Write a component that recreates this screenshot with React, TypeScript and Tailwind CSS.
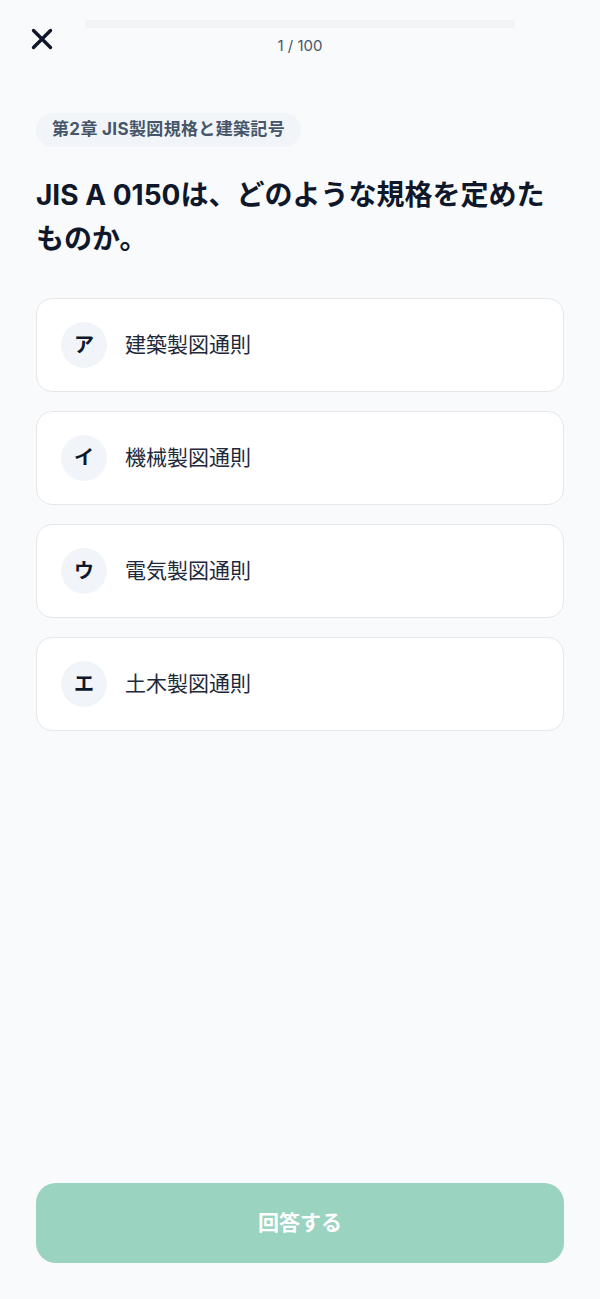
import React from "react";

const options = [
  { key: "ア", text: "建築製図通則" },
  { key: "イ", text: "機械製図通則" },
  { key: "ウ", text: "電気製図通則" },
  { key: "エ", text: "土木製図通則" },
];

export default function App() {
  return (
    <div
      className="w-[600px] h-[1299px] bg-[#f9fafb] flex flex-col text-[#0f172a]"
      style={{ fontFamily: 'Inter, "Noto Sans CJK JP", sans-serif' }}
    >
      {/* Header: close + progress */}
      <div className="relative h-[70px]">
        <button className="absolute left-[29px] top-[26px] w-[26px] h-[26px] flex items-center justify-center">
          <svg width="24" height="24" viewBox="0 0 24 24" fill="none" stroke="#0f172a" strokeWidth="3.4" strokeLinecap="round">
            <path d="M3.5 3.5 L20.5 20.5 M20.5 3.5 L3.5 20.5" />
          </svg>
        </button>
        <div className="absolute left-[85px] top-[20px] w-[430px] h-[8px] rounded-full bg-[#f1f3f6]" />
        <div className="absolute left-0 right-0 top-[35px] text-center text-[15px] text-[#475569]">1 / 100</div>
      </div>

      <div className="px-[36px] pt-[43px] flex flex-col">
        <div className="self-start rounded-full bg-[#f1f5f9] px-[16px] h-[34px] flex items-center text-[17px] tracking-[0.02em] font-bold text-[#475569]">
          第2章 JIS製図規格と建築記号
        </div>

        <h1 className="mt-[26px] text-[28px] leading-[44px] font-bold">
          JIS A 0150は、どのような規格を定めたものか。
        </h1>

        <div className="mt-[37px] flex flex-col gap-[19px]">
          {options.map((o) => (
            <div
              key={o.key}
              className="h-[94px] rounded-[16px] border border-[#e5e7eb] bg-white flex items-center px-[24px]"
            >
              <div className="w-[46px] h-[46px] rounded-full bg-[#f1f5f9] flex items-center justify-center text-[20px] font-bold">
                {o.key}
              </div>
              <span className="ml-[18px] text-[21px] text-[#1e293b]">{o.text}</span>
            </div>
          ))}
        </div>
      </div>

      <div className="mt-auto px-[36px] pb-[36px]">
        <button className="w-full h-[80px] rounded-[20px] bg-[#9ad3c0] text-white text-[21px] font-bold">
          回答する
        </button>
      </div>
    </div>
  );
}
